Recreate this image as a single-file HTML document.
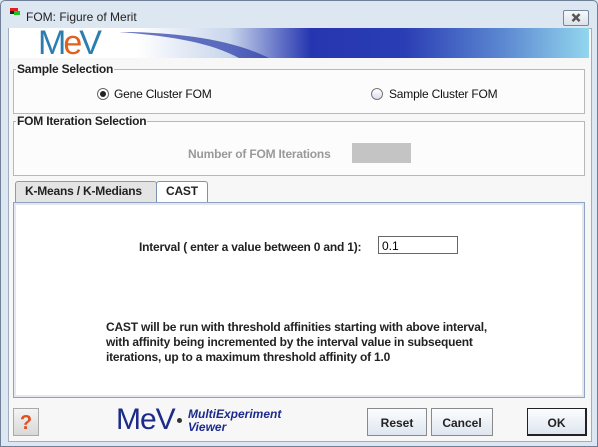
<!DOCTYPE html>
<html><head><style>
body{margin:0;width:598px;height:447px;overflow:hidden;background:#dce7f2;font-family:"Liberation Sans",Arial,sans-serif;position:relative}
.a{position:absolute}
.frame{left:0;top:0;width:596px;height:445px;border:1px solid #6f7f95;border-radius:5px 5px 0 0;background:#dce7f2}
.panel{left:8px;top:28px;width:582px;height:412px;background:#f7f7f7;border:1px solid #a0aec0}
.b{font-weight:bold;font-size:12px;color:#222;letter-spacing:-0.2px}
fieldset{position:absolute;border:1px solid #b8b8b8;margin:0;padding:0;background:#fcfcfc}
legend{font-weight:bold;font-size:12px;color:#222;padding:0 1px;margin-left:2px;letter-spacing:-0.2px}
.btn{position:absolute;top:408px;height:28px;border:1px solid #8a8a8a;background:linear-gradient(#fbfdff,#dfe6ef);font-weight:bold;font-size:12px;color:#222;text-align:center;line-height:28px;box-sizing:border-box}
</style></head><body>
<div class="a frame"></div>
<div class="a" style="left:10px;top:8px;width:8px;height:3px;background:#e02020"></div>
<div class="a" style="left:14px;top:11px;width:6px;height:4px;background:#20c020"></div>
<div class="a" style="left:10px;top:11px;width:4px;height:3px;background:#202020"></div>
<div class="a" style="left:26px;top:10px;font-size:12px;color:#222">FOM: Figure of Merit</div>
<div class="a" style="left:563px;top:10px;width:24px;height:14px;border:1px solid #7a8699;border-radius:2px;background:linear-gradient(#f6f8fb,#dbe2ea);font-size:12px;text-align:center;line-height:14px;color:#fff;font-weight:bold;-webkit-text-stroke:0.8px #555">✕</div>
<div class="a panel"></div>
<div class="a" style="left:9px;top:28px;width:580px;height:30px;background:linear-gradient(90deg,#fff 0%,#fff 22%,#c9d6ec 38%,#2636b0 52%,#2a3db4 68%,#5b87d0 85%,#93d6ee 100%)"></div>
<svg class="a" style="left:9px;top:28px" width="300" height="30"><path d="M110 4 C160 4 220 10 260 30 L230 30 C200 14 160 8 110 4Z" fill="#2a3aa8" opacity=".7"/></svg>
<div class="a" style="left:38px;top:26px;font-size:34px;color:#2b7fb0;letter-spacing:-3px;line-height:34px">M<span style="color:#e0601c">e</span>V</div>
<fieldset style="left:13px;top:62px;width:570px;height:50px"><legend>Sample Selection</legend></fieldset>
<div class="a" style="left:97px;top:88px;width:10px;height:10px;border:1px solid #666;border-radius:50%;background:#fff"></div>
<div class="a" style="left:100px;top:91px;width:6px;height:6px;border-radius:50%;background:#222"></div>
<div class="a b" style="left:114px;top:87px;font-weight:normal;color:#111">Gene Cluster FOM</div>
<div class="a" style="left:371px;top:88px;width:10px;height:10px;border:1px solid #777;border-radius:50%;background:linear-gradient(#fff,#dde)"></div>
<div class="a b" style="left:389px;top:87px;font-weight:normal;color:#111">Sample Cluster FOM</div>
<fieldset style="left:13px;top:114px;width:570px;height:60px"><legend>FOM Iteration Selection</legend></fieldset>
<div class="a b" style="left:188px;top:147px;color:#999">Number of FOM Iterations</div>
<div class="a" style="left:352px;top:143px;width:59px;height:20px;background:#c4c4c4"></div>
<div class="a" style="left:15px;top:181px;width:140px;height:20px;border:1px solid #999;border-bottom:none;background:#e4e4e4;border-radius:3px 3px 0 0"></div>
<div class="a b" style="left:25px;top:184px">K-Means / K-Medians</div>
<div class="a" style="left:156px;top:181px;width:50px;height:22px;border:1px solid #7a93b5;border-bottom:none;background:#fff;border-radius:3px 3px 0 0"></div>
<div class="a b" style="left:166px;top:184px">CAST</div>
<div class="a" style="left:13px;top:202px;width:572px;height:196px;border:1px solid #8fa4c0;background:#fff;box-sizing:border-box;box-shadow:inset 0 0 0 2px #e4e8ee"></div>
<div class="a b" style="left:139px;top:240px">Interval ( enter a value between 0 and 1):</div>
<div class="a" style="left:378px;top:236px;width:80px;height:18px;border:1px solid #666;background:#fff;font-size:12px;line-height:18px;padding-left:3px;box-sizing:border-box">0.1</div>
<div class="a b" style="left:106px;top:320px;line-height:15px">CAST will be run with threshold affinities starting with above interval,<br>with affinity being incremented by the interval value in subsequent<br>iterations, up to a maximum threshold affinity of 1.0</div>
<div class="a" style="left:13px;top:408px;width:26px;height:28px;border:1px solid #aaa;background:linear-gradient(#f4f4f4,#d8d8d8);box-sizing:border-box;text-align:center;color:#e0501c;font-weight:bold;font-size:20px;line-height:28px">?</div>
<div class="a" style="left:116px;top:403px;font-size:30px;color:#1c2a8a;letter-spacing:-1px;font-weight:300">MeV</div>
<div class="a" style="left:177px;top:418px;width:5px;height:5px;border-radius:50%;background:#333"></div>
<div class="a" style="left:188px;top:408px;font-size:12px;font-style:italic;font-weight:bold;color:#1c2a8a;line-height:13px">MultiExperiment<br>Viewer</div>
<div class="btn" style="left:367px;width:60px">Reset</div>
<div class="btn" style="left:431px;width:62px">Cancel</div>
<div class="btn" style="left:527px;width:60px;border:1px solid #222;border-width:1px 2px 2px 1px">OK</div>
</body></html>
